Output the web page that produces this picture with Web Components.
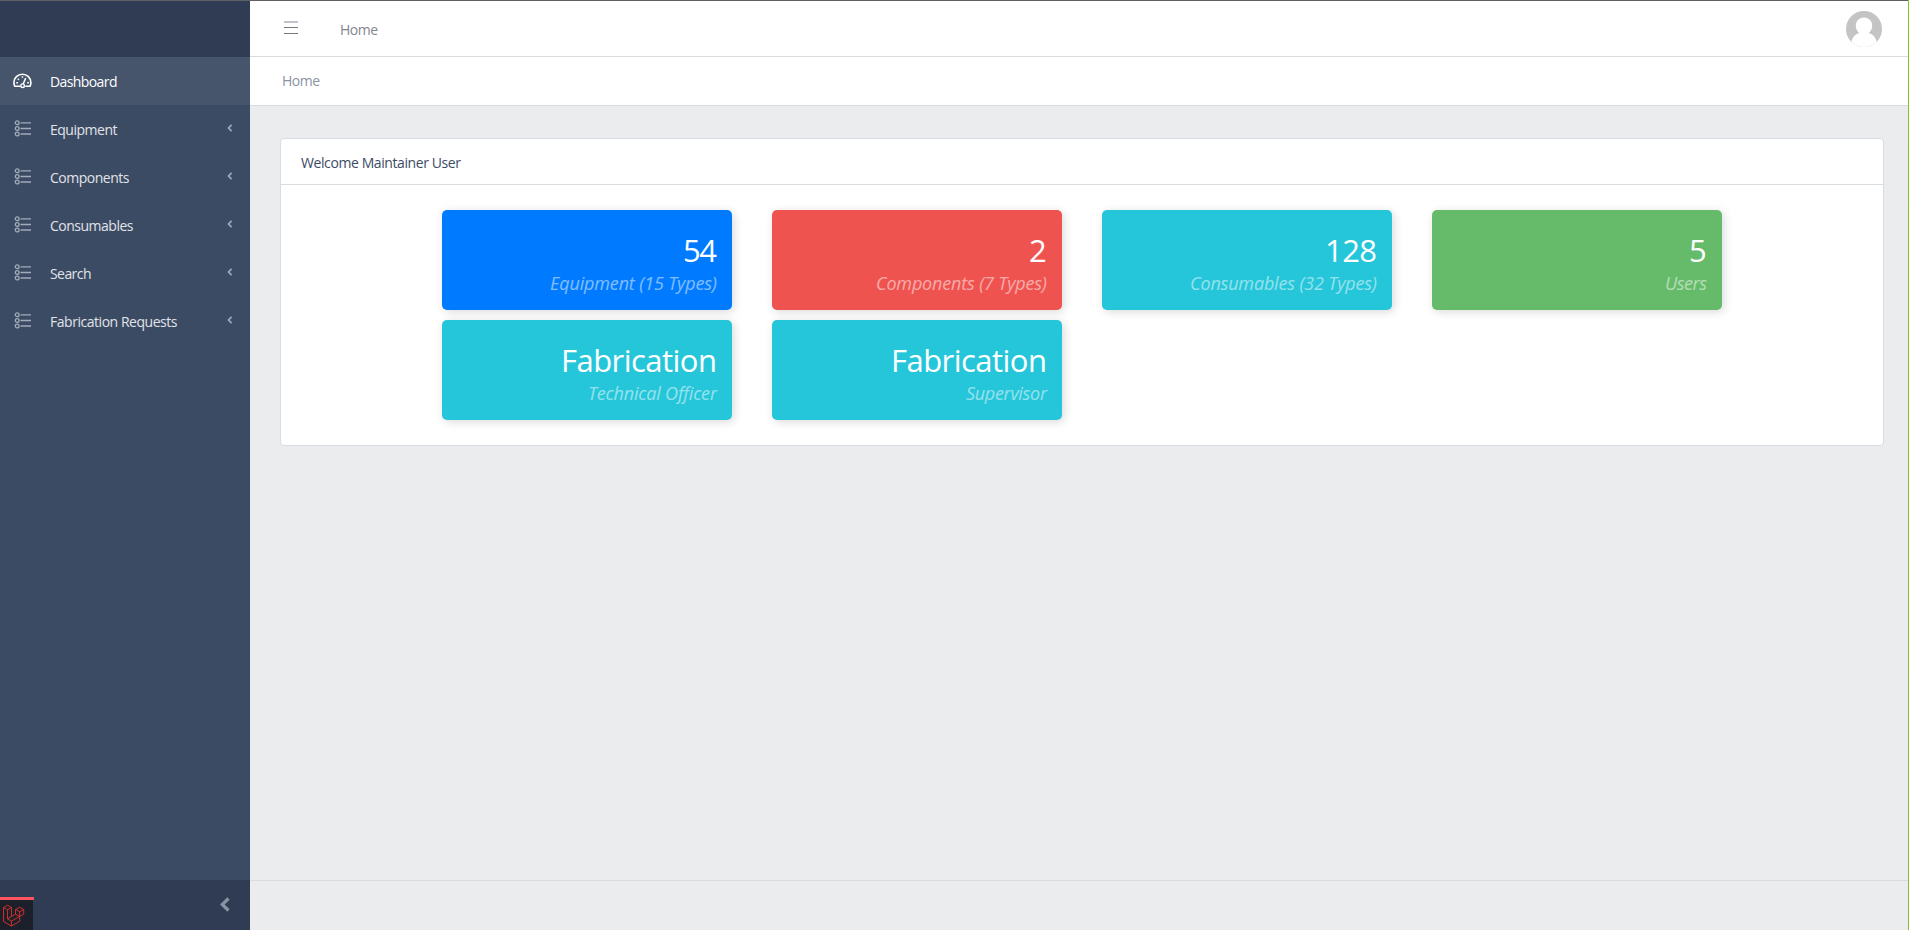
<!DOCTYPE html>
<html lang="en">
<head>
<meta charset="utf-8">
<title>Home</title>
<style>
html,body{margin:0;height:100%;overflow:hidden}
body{font-family:"Open Sans","Noto Sans",sans-serif;font-size:14px;color:#3c4b64;background:#ebecee}
</style>
</head>
<body>
<app-shell>
  <side-bar slot="side">
    <nav-item active label="Dashboard" w="67.5"></nav-item>
    <nav-item label="Equipment" w="67.5"></nav-item>
    <nav-item label="Components" w="79.5"></nav-item>
    <nav-item label="Consumables" w="83.5"></nav-item>
    <nav-item label="Search" w="41.5"></nav-item>
    <nav-item label="Fabrication Requests" w="127.5"></nav-item>
  </side-bar>
  <top-bar slot="top"></top-bar>
  <panel-card>
    <fit-text slot="title" w="160">Welcome Maintainer User</fit-text>
    <stat-tile color="#007bff" value="54" vw="34" label="Equipment (15 Types)" lw="167"></stat-tile>
    <stat-tile color="#ef5350" value="2" vw="18" label="Components (7 Types)" lw="171"></stat-tile>
    <stat-tile color="#26c6da" value="128" vw="52" label="Consumables (32 Types)" lw="187"></stat-tile>
    <stat-tile color="#66bb6a" value="5" vw="18" label="Users" lw="42"></stat-tile>
    <stat-tile color="#26c6da" value="Fabrication" vw="156" label="Technical Officer" lw="129"></stat-tile>
    <stat-tile color="#26c6da" value="Fabrication" vw="156" label="Supervisor" lw="81"></stat-tile>
  </panel-card>
</app-shell>
<debug-badge></debug-badge>
<script>
class Base extends HTMLElement{
  constructor(){super();this.attachShadow({mode:'open'});}
  connectedCallback(){this.shadowRoot.innerHTML=this.render();this.ready();}
  ready(){}
  a(n){return this.getAttribute(n)||'';}
}
/* Tracks a single-line label so that it takes exactly `w` pixels. */
class FitText extends Base{
  render(){return `<style>:host{display:inline-block;white-space:nowrap}span{display:inline-block}</style><span><slot></slot></span>`;}
  ready(){
    const w=parseFloat(this.a('w')),n=this.textContent.length,s=this.shadowRoot.querySelector('span');
    this.style.width=w+'px';
    const d=w-s.getBoundingClientRect().width;
    if(n>1)s.style.letterSpacing=(d/(n-1))+'px';
  }
}
class AppShell extends Base{
  render(){return `<style>
  :host{display:flex;height:100vh;box-sizing:border-box}
  .row{display:flex;flex:1;min-width:0;border-top:1px solid #5f5f66}
  .edge{width:1px;background:linear-gradient(#84c41e,#8cb43c)}
  .main{flex:1;display:flex;flex-direction:column;min-width:0}
  main{flex:1;padding:32px 24px 0 30px}
  footer{height:49px;border-top:1px solid #d8dbe0}
  </style><div class="row"><slot name="side"></slot><div class="main"><slot name="top"></slot><main><slot></slot></main><footer></footer></div></div><div class="edge"></div>`;}
}
class SideBar extends Base{
  render(){return `<style>
  :host{display:flex;flex-direction:column;width:250px;background:#3c4b64}
  .brand{height:56px;background:#303c54}
  nav{flex:1}
  .min{height:50px;background:#303c54;display:flex;justify-content:flex-end;align-items:center;box-sizing:border-box;padding-right:19px}
  svg{display:block}
  </style><div class="brand"></div><nav><slot></slot></nav>
  <div class="min"><svg width="12" height="16" viewBox="0 0 12 16"><path d="M9.500 1.500 3.300 7.500l6.200 6" fill="none" stroke="#8a93a2" stroke-width="3.200"/></svg></div>`;}
}
const GAUGE='<svg width="20" height="16" viewBox="0 0 20 16" fill="none" stroke="#fff"><path stroke-width="1.600" d="M7.300 13.200H1.800C1.200 12 .9 10.800.9 9.700a8.500 8.500 0 0 1 17 0c0 1.100-.3 2.300-.9 3.500h-4.700"/><circle cx="9.600" cy="12.700" r="1.800" stroke-width="1.400"/><path stroke-width="1.500" d="M10.200 10.900 12.700 5"/><path stroke-width="1.600" d="M8.700 4h1.500M4.800 5.700l1.100 1.100M3.300 9.800h1.700M14.200 9.800h1.700"/></svg>';
const LIST='<svg width="18" height="17" viewBox="0 0 18 17" fill="none" stroke="#a3abb8"><g stroke-width="1.300"><circle cx="3.200" cy="2.800" r="1.900"/><circle cx="3.200" cy="8.500" r="1.900"/><circle cx="3.200" cy="14" r="1.900"/></g><path stroke-width="1.300" d="M6.500 2.800h10.500M6.500 8.500h10.500M6.500 14h10.500"/></svg>';
class NavItem extends Base{
  render(){const on=this.hasAttribute('active');return `<style>
  :host{display:flex;align-items:center;height:48px;box-sizing:border-box;padding:0 17px 0 13px;color:${on?'#fff':'#e0e3e8'};background:${on?'#46546c':'transparent'}}
  .ic{width:36px;padding-left:1px;display:flex;position:relative;top:${on?'0':'-1px'}}
  .on{padding-left:0;width:37px}
  .ic svg{display:block}
  .tx{flex:1;line-height:20px;margin-top:2px}
  .ch{position:relative;top:-1px}
  </style><span class="ic${on?' on':''}">${on?GAUGE:LIST}</span><span class="tx"><fit-text w="${this.a('w')}">${this.a('label')}</fit-text></span>
  ${on?'':'<svg class="ch" width="6" height="8" viewBox="0 0 6 8"><path d="M4.600.8 1.500 4l3.100 3.200" fill="none" stroke="#a3abb8" stroke-width="1.700"/></svg>'}`;}
}
class TopBar extends Base{
  render(){return `<style>
  :host{display:block;background:#fff;color:#8a93a2}
  .bar{height:55px;border-bottom:1px solid #d8dbe0;display:flex;align-items:center;padding:0 26px 0 34px}
  .home{margin-left:42px;margin-top:1px;color:#858590}
  .crumb{height:48px;border-bottom:1px solid #d8dbe0;display:flex;align-items:center;padding-left:32px}
  .crumb fit-text{margin-top:-2px}
  .sp{flex:1}
  svg{display:block}
  </style><div class="bar"><svg width="14" height="14" viewBox="0 0 14 14" style="margin-top:-1px"><path d="M0 0h14v2H0z" fill="#c3c3cb"/><path d="M0 6h14v1H0zM0 12h14v1H0z" fill="#787885"/></svg>
  <fit-text class="home" w="38">Home</fit-text><span class="sp"></span>
  <svg width="36" height="36" viewBox="0 0 36 36"><defs><clipPath id="c"><circle cx="18" cy="18" r="18"/></clipPath></defs><g clip-path="url(#c)"><path fill="#c4c4c4" d="M0 0h36v36H0z"/><path fill="#fff" d="M18 6.500c5 0 8.200 3.600 8.200 8.300 0 3-1.300 5.300-3.400 7.200 4.400 1.400 7 4.500 8 9V36H5.200v-5c1-4.500 3.600-7.600 8-9-2.100-1.900-3.400-4.200-3.400-7.200 0-4.700 3.200-8.300 8.200-8.300z"/></g></svg></div>
  <div class="crumb"><fit-text w="38">Home</fit-text></div>`;}
}
class PanelCard extends Base{
  render(){return `<style>
  :host{display:block;background:#fff;border:1px solid #d8dbe0;border-radius:4px}
  header{height:45px;border-bottom:1px solid #d8dbe0;display:flex;align-items:center;padding-left:20px}
  header slot{display:block;margin-top:1px}
  .grid{display:grid;grid-template-columns:repeat(4,290px);column-gap:40px;row-gap:10px;justify-content:center;padding:25px 0}
  </style><header><slot name="title"></slot></header><div class="grid"><slot></slot></div>`;}
}
class StatTile extends Base{
  render(){return `<style>
  :host{display:flex;flex-direction:column;align-items:flex-end;height:100px;box-sizing:border-box;padding:20px 15px 0 0;border-radius:5px;background:${this.a('color')};color:#fff;box-shadow:2px 2px 10px #dadada}
  .v{font-size:31px;line-height:40px}
  .l{font-size:18px;line-height:24px;font-style:italic;opacity:.5;margin-top:1px}
  </style><fit-text class="v" w="${this.a('vw')}">${this.a('value')}</fit-text><fit-text class="l" w="${this.a('lw')}">${this.a('label')}</fit-text>`;}
}
class DebugBadge extends Base{
  render(){return `<style>
  :host{position:absolute;left:0;bottom:0;width:34px;height:33px;box-sizing:border-box;border-top:3px solid #ff5560;background:#303c54}
  .b{width:33px;height:30px;background:#1b202b}
  svg{display:block}
  </style><div class="b"><svg width="33" height="30" viewBox="0 0 33 30" fill="none" stroke="#e0302a" stroke-width=".9" stroke-linejoin="round"><path d="M3.500 7.500 7.500 5.300l4 2.200-4 2.300zM3.500 7.500v14l8 4.500 8.200-4.700v-5M11.500 7.500v9M7.500 9.800v9l4-2.300M7.500 18.800l4 2.300 8.200-4.800M11.500 21.100V26M11.500 16.500l4-2.300v-4.700l4.200-2.200 4 2.200v4.700l-4 2.200-4.200-2.200M15.500 9.500l4.200 2.300 4-2.300M19.700 11.800v4.600"/></svg></div>`;}
}
customElements.define('fit-text',FitText);
customElements.define('nav-item',NavItem);
customElements.define('side-bar',SideBar);
customElements.define('top-bar',TopBar);
customElements.define('stat-tile',StatTile);
customElements.define('panel-card',PanelCard);
customElements.define('app-shell',AppShell);
customElements.define('debug-badge',DebugBadge);
</script>
</body>
</html>
